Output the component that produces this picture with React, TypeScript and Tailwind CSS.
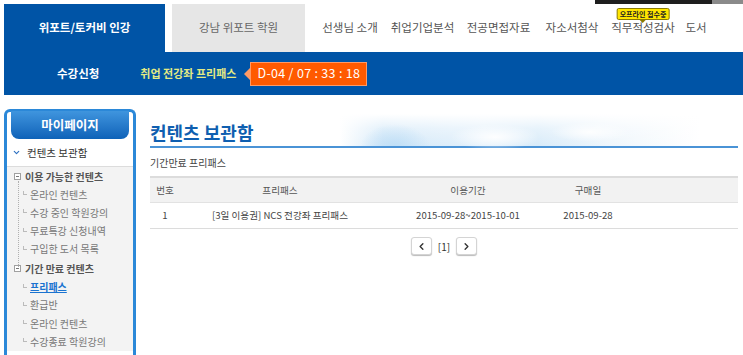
import { ChevronDown, ChevronLeft, ChevronRight } from 'lucide-react';

const font = '"Noto Sans CJK KR", "Noto Sans", sans-serif';

const topMenu = [
  { label: '선생님 소개', w: 'w-[72px]' },
  { label: '취업기업분석', w: 'w-[73px]' },
  { label: '전공면접자료', w: 'w-[79px]' },
  { label: '자소서첨삭', w: 'w-[68px]' },
  { label: '직무적성검사', w: 'w-[74px]', badge: true },
  { label: '도서', w: 'w-[32px]' },
];

type TreeItem = { label: string; group?: boolean; active?: boolean };

const tree: TreeItem[] = [
  { label: '이용 가능한 컨텐츠', group: true },
  { label: '온라인 컨텐츠' },
  { label: '수강 중인 학원강의' },
  { label: '무료특강 신청내역' },
  { label: '구입한 도서 목록' },
  { label: '기간 만료 컨텐츠', group: true },
  { label: '프리패스', active: true },
  { label: '환급반' },
  { label: '온라인 컨텐츠' },
  { label: '수강종료 학원강의' },
];

function MinusBox() {
  return (
    <span className="flex h-[7px] w-[7px] items-center justify-center border border-[#a0a0a0] bg-white">
      <span className="h-px w-[3px] bg-[#777]" />
    </span>
  );
}

function Sidebar() {
  return (
    <aside className="flex h-[262px] w-[132px] flex-col rounded-t-[6px] border-[3px] border-b-0 border-[#2b88d8] bg-white">
      <div className="mx-[4px] -mt-[1px] flex h-[28px] items-center justify-center rounded-b-[8px] bg-gradient-to-b from-[#3f95de] to-[#0d62b8] text-[12.5px] font-bold text-white">
        마이페이지
      </div>
      <div className="flex h-[28px] items-center gap-[6px] border-b border-[#dcdcdc] pl-[5px] text-[10.5px] text-[#333]">
        <ChevronDown size={9} strokeWidth={3} className="text-[#2b6fc0]" />
        <span>컨텐츠 보관함</span>
      </div>
      <div className="relative flex h-[184px] flex-col bg-[#f3f3f3]">
        <div className="absolute left-[11px] top-[14px] h-[86px] border-l border-dotted border-[#b0b0b0]" />
        {tree.map((t, i) =>
          t.group ? (
            <div key={i} className={`flex h-[18.2px] items-center gap-[4px] pl-[7px] text-[10px] font-bold text-[#555] ${i > 0 ? 'mt-[1.5px]' : ''}`}>
              <MinusBox />
              <span>{t.label}</span>
            </div>
          ) : (
            <div key={i} className="flex h-[18.2px] items-center gap-[3px] pl-[16px] text-[10px]">
              <span className="mb-[2px] h-[4px] w-[4px] border-b border-l border-[#bbb]" />
              <span className={t.active ? 'font-bold text-[#1a73d0] underline' : 'text-[#777]'}>{t.label}</span>
            </div>
          )
        )}
      </div>
    </aside>
  );
}

export default function App() {
  return (
    <div className="relative h-[355px] w-[743px] overflow-hidden bg-white" style={{ fontFamily: font }}>
      {/* cut-off banner at top right */}
      <div className="absolute right-0 top-0 flex h-[4px]">
        <div className="w-[117px] bg-[#1e1e1e]" />
        <div className="w-[31px] bg-[#8a8a8a]" />
      </div>

      {/* top navigation */}
      <header className="flex h-[52px] items-end pl-[4px]">
        <div className="flex h-[48px] w-[161px] items-center justify-center bg-[#0054a6] text-[11.5px] font-bold text-white">
          위포트/토커비 인강
        </div>
        <div className="ml-[7px] flex h-[48px] w-[133px] items-center justify-center bg-[#e6e6e6] text-[11.5px] text-[#666]">
          강남 위포트 학원
        </div>
        <nav className="ml-[9px] flex h-[48px] items-center">
          {topMenu.map((m) => (
            <div key={m.label} className={`relative flex h-full items-center justify-center ${m.w} text-[11.5px] text-[#555]`}>
              {m.badge && (
                <div className="absolute left-1/2 top-[4px] -translate-x-1/2">
                  <div className="whitespace-nowrap rounded-[2px] border border-[#8a7a00] bg-[#ffe600] px-[2px] text-[7px] font-bold leading-[10px] text-[#222]">
                    오프라인 접수중
                  </div>
                  <div className="mx-auto h-0 w-0 border-x-[3px] border-t-[3px] border-x-transparent border-t-[#8a7a00]" />
                </div>
              )}
              {m.label}
            </div>
          ))}
        </nav>
      </header>

      {/* sub bar */}
      <div className="ml-[4px] flex h-[43px] items-center bg-[#0054a6]">
        <span className="ml-[53px] text-[11.5px] font-bold text-white">수강신청</span>
        <span className="ml-[41px] text-[11px] font-bold text-[#e3ea83]">취업 전강좌 프리패스</span>
        <div className="ml-[8px] flex items-center">
          <div className="h-0 w-0 border-y-[6px] border-r-[6px] border-y-transparent border-r-[#ff9a66]" />
          <div className="flex h-[24px] w-[117px] items-center justify-center border border-[#ff9a66] bg-[#ff5a00] text-[12.5px] tracking-[0.3px] text-white">
            D-04 / 07 : 33 : 18
          </div>
        </div>
      </div>

      {/* body */}
      <div className="flex pt-[14px]">
        <div className="ml-[4px]">
          <Sidebar />
        </div>

        <main className="ml-[14px] w-[588px]">
          <div className="relative h-[39px] border-b-2 border-[#4a93d6]">
            {/* sky / cloud banner */}
            <div className="absolute bottom-0 left-[190px] h-[32px] w-[360px] bg-[linear-gradient(to_right,rgba(214,234,249,0)_0%,#d3e8f8_12%,#e2f0fb_40%,#d8ebf9_55%,#eef6fc_75%,rgba(255,255,255,0)_100%)]" />
            <div className="absolute bottom-0 left-[190px] h-[32px] w-[360px] bg-[linear-gradient(to_bottom,#ffffff_0%,rgba(255,255,255,0.4)_45%,rgba(255,255,255,0)_100%)]" />
            <div className="absolute bottom-[-4px] left-[300px] h-[26px] w-[90px] bg-[radial-gradient(ellipse_at_center,rgba(255,255,255,0.95)_0%,rgba(255,255,255,0)_70%)]" />
            <div className="absolute bottom-[4px] left-[400px] h-[20px] w-[80px] bg-[radial-gradient(ellipse_at_center,rgba(255,255,255,0.9)_0%,rgba(255,255,255,0)_70%)]" />
            <div className="absolute bottom-0 left-[210px] h-[22px] w-[70px] bg-[radial-gradient(ellipse_at_50%_100%,rgba(190,222,246,0.9)_0%,rgba(190,222,246,0)_70%)]" />
            <h1 className="relative pt-[12px] text-[18px] font-bold leading-[22px] text-[#0f5fb0]">컨텐츠 보관함</h1>
          </div>
          <div className="flex h-[28px] items-center text-[10px] text-[#444]">기간만료 프리패스</div>

          <div className="border-t-2 border-[#dcdcdc]">
            <div className="grid h-[25px] grid-cols-[30px_200px_176px_64px_1fr] items-center border-b border-[#e2e2e2] bg-[#f2f2f2] text-[9.6px] text-[#555]">
              <span className="text-center">번호</span>
              <span className="text-center">프리패스</span>
              <span className="text-center">이용기간</span>
              <span className="text-center">구매일</span>
              <span />
            </div>
            <div className="grid h-[26px] grid-cols-[30px_200px_176px_64px_1fr] items-center border-b border-[#dcdcdc] text-[9.6px] text-[#444]">
              <span className="text-center">1</span>
              <span className="text-center">[3일 이용권] NCS 전강좌 프리패스</span>
              <span className="text-center">2015-09-28~2015-10-01</span>
              <span className="text-center">2015-09-28</span>
              <span />
            </div>
          </div>

          <div className="mt-[8px] flex items-center justify-center gap-[6px]">
            <button className="flex h-[18px] w-[21px] items-center justify-center rounded-[3px] border border-[#d4d4d4] bg-white shadow-[0_1px_1px_#bbb]">
              <ChevronLeft size={11} strokeWidth={3} className="text-[#333]" />
            </button>
            <span className="text-[10px] text-[#333]">[1]</span>
            <button className="flex h-[18px] w-[21px] items-center justify-center rounded-[3px] border border-[#d4d4d4] bg-white shadow-[0_1px_1px_#bbb]">
              <ChevronRight size={11} strokeWidth={3} className="text-[#333]" />
            </button>
          </div>
        </main>
      </div>
    </div>
  );
}
